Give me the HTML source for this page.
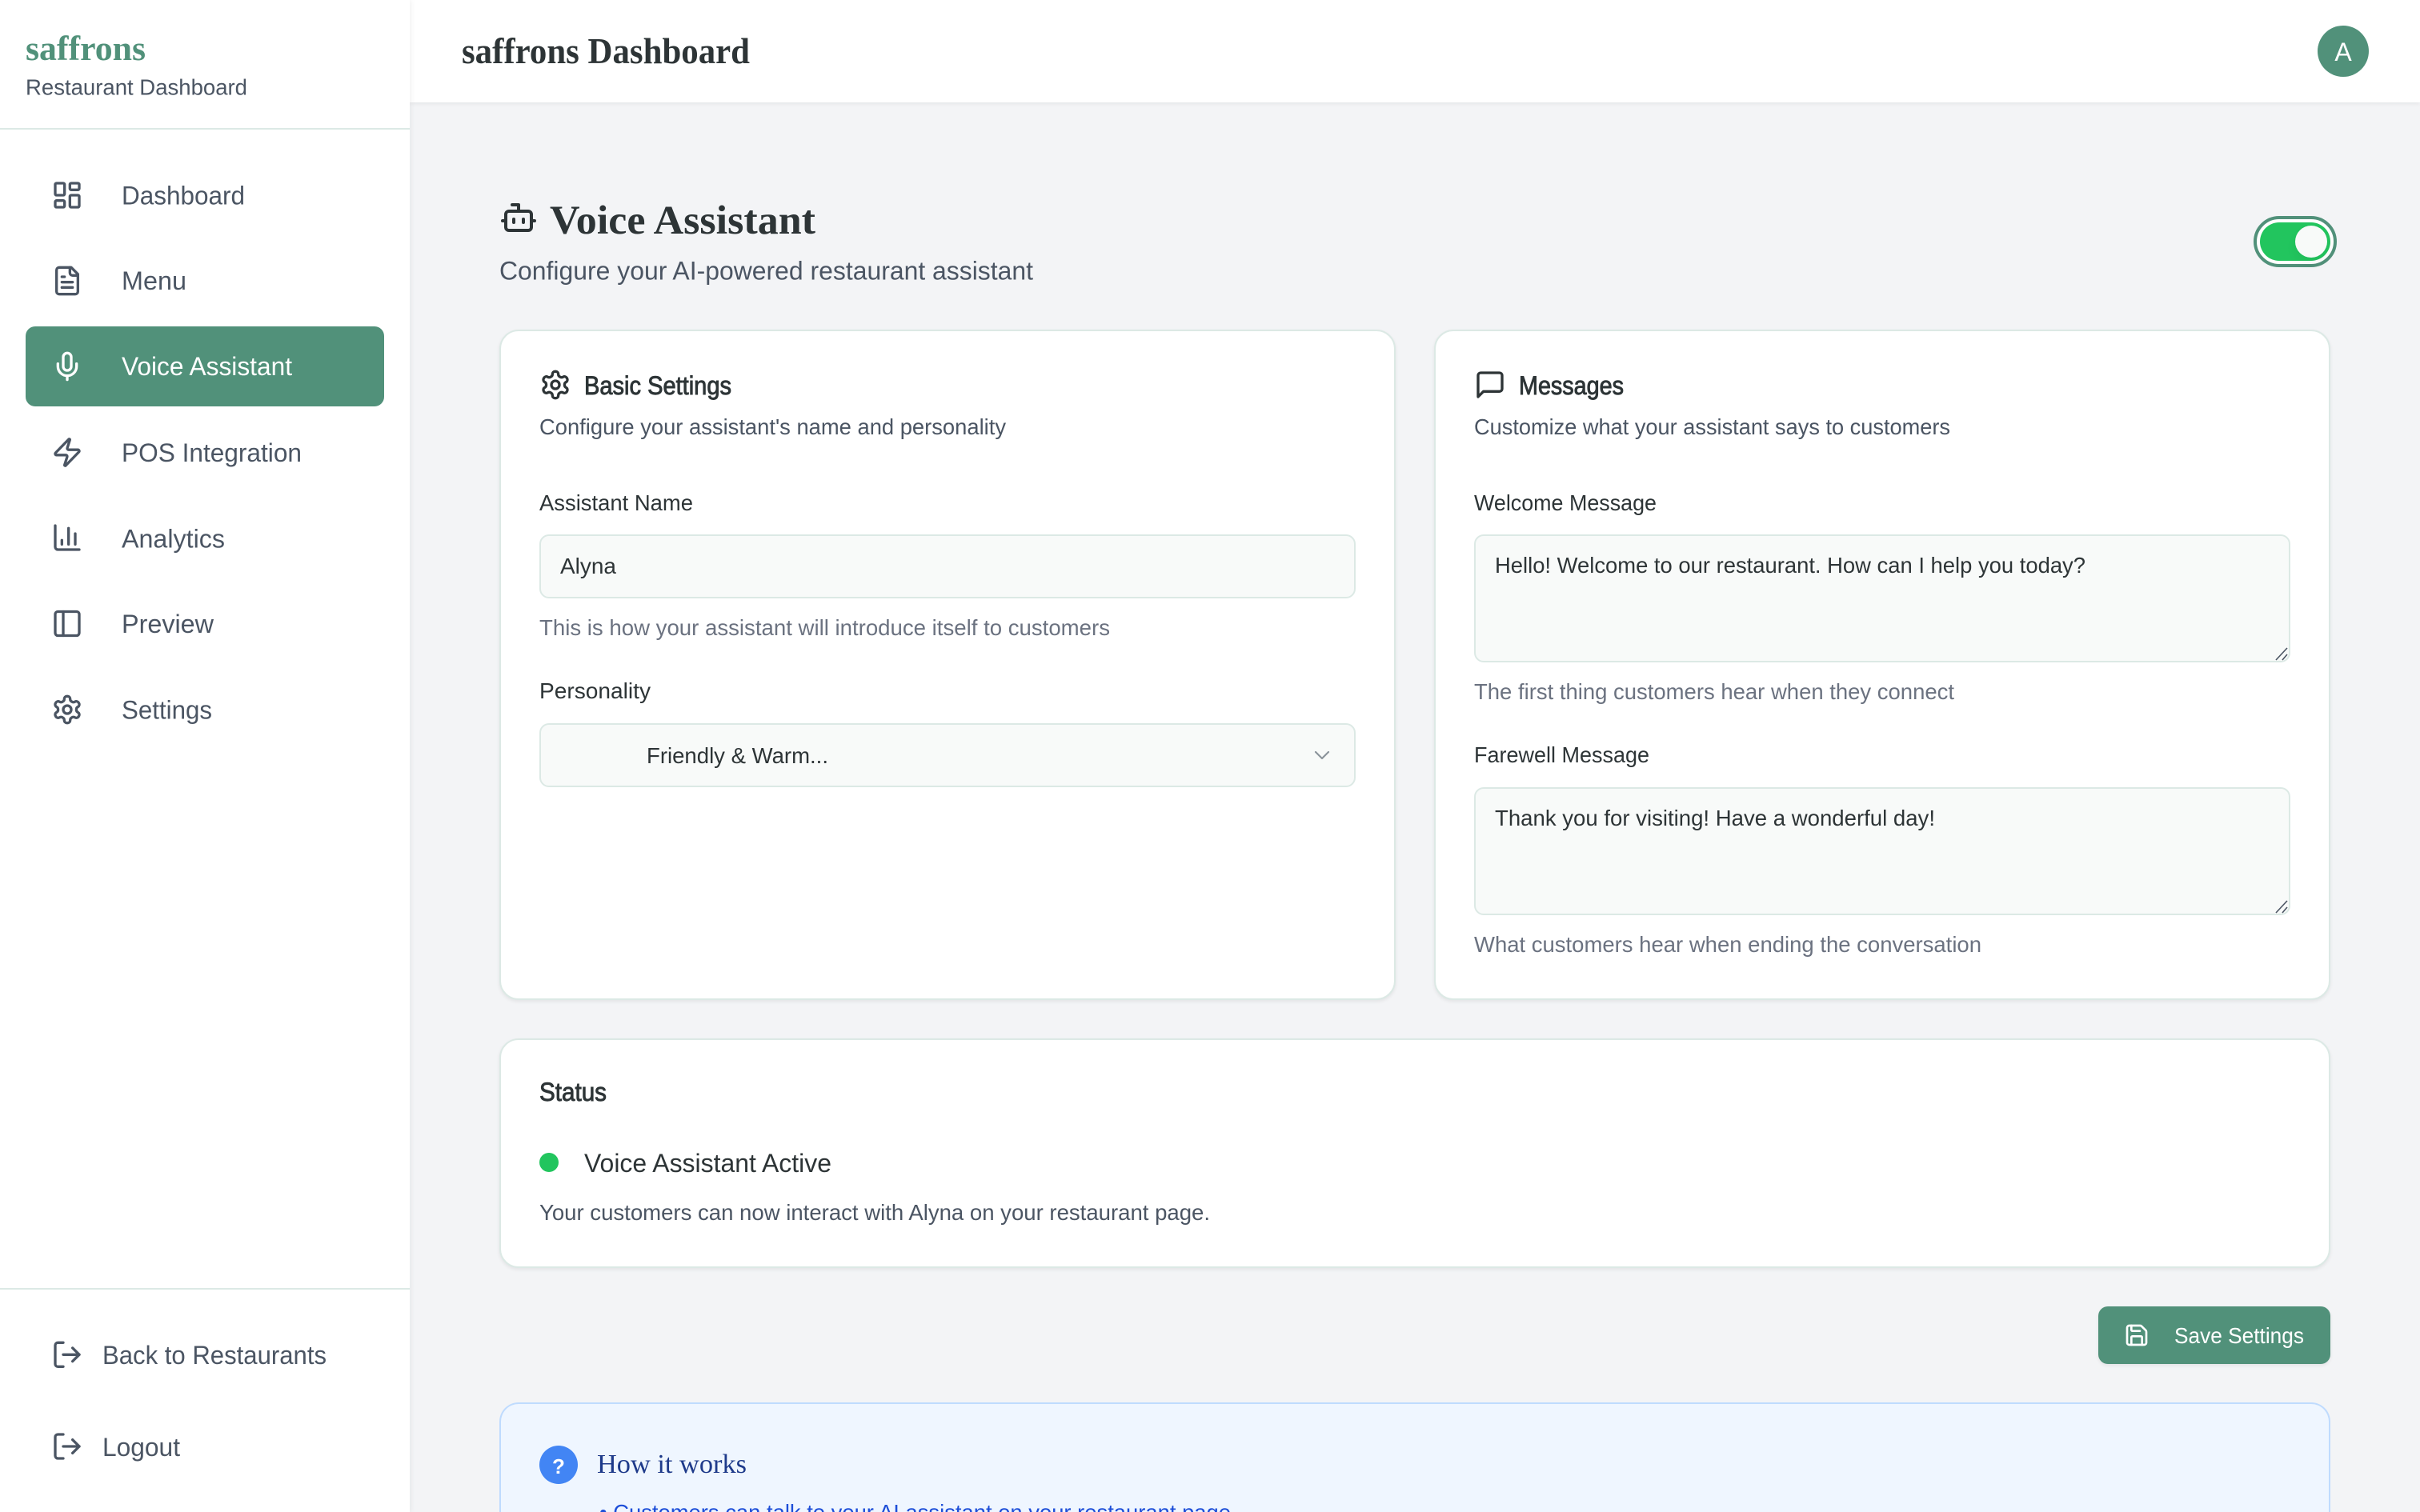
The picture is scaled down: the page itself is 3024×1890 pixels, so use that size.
<!DOCTYPE html>
<html lang="en">
<head>
<meta charset="utf-8">
<title>saffrons Dashboard - Voice Assistant</title>
<style>
html,body{margin:0;padding:0;width:3024px;height:1890px;overflow:hidden;background:#f3f4f6}
#page{position:relative;width:3024px;height:1890px;overflow:hidden;background:#f3f4f6}
.b{position:absolute;box-sizing:border-box}
.card{background:#fff;border:2px solid #dce9e5;border-radius:24px;box-shadow:0 2px 5px rgba(0,0,0,.07)}
.field{background:#f8faf9;border:2px solid #dce9e5;border-radius:12px}
svg.o{position:absolute;left:0;top:0;width:3024px;height:1890px}
text{font-family:"Liberation Sans",Arial,sans-serif;font-size:28px;fill:#2d3436}
.s{font-family:"Liberation Serif","Times New Roman",serif;font-weight:700}
.n{font-size:32px;fill:#4b5563}
.g{fill:#4b5563}
.h{fill:#6b7280}
.t{font-size:32px;fill:#2d3436;stroke:#2d3436;stroke-width:.9px}
.i{fill:none;stroke-width:2;stroke-linecap:round;stroke-linejoin:round}
</style>
</head>
<body>
<div id="page">
<svg width="0" height="0" style="position:absolute">
<defs>
<symbol id="gear" viewBox="0 0 24 24"><path d="M12.22 2h-.44a2 2 0 0 0-2 2v.18a2 2 0 0 1-1 1.73l-.43.25a2 2 0 0 1-2 0l-.15-.08a2 2 0 0 0-2.73.73l-.22.38a2 2 0 0 0 .73 2.73l.15.1a2 2 0 0 1 1 1.72v.51a2 2 0 0 1-1 1.74l-.15.09a2 2 0 0 0-.73 2.73l.22.38a2 2 0 0 0 2.73.73l.15-.08a2 2 0 0 1 2 0l.43.25a2 2 0 0 1 1 1.73V20a2 2 0 0 0 2 2h.44a2 2 0 0 0 2-2v-.18a2 2 0 0 1 1-1.73l.43-.25a2 2 0 0 1 2 0l.15.08a2 2 0 0 0 2.73-.73l.22-.39a2 2 0 0 0-.73-2.73l-.15-.08a2 2 0 0 1-1-1.74v-.5a2 2 0 0 1 1-1.74l.15-.09a2 2 0 0 0 .73-2.73l-.22-.38a2 2 0 0 0-2.73-.73l-.15.08a2 2 0 0 1-2 0l-.43-.25a2 2 0 0 1-1-1.73V4a2 2 0 0 0-2-2z"/><circle cx="12" cy="12" r="3"/></symbol>
<symbol id="out" viewBox="0 0 24 24"><path d="M9 21H5a2 2 0 0 1-2-2V5a2 2 0 0 1 2-2h4"/><path d="M16 17l5-5-5-5"/><path d="M21 12H9"/></symbol>
</defs>
</svg>

<!-- header -->
<div class="b" style="left:512px;top:0;width:2512px;height:128px;background:#fff;box-shadow:0 2px 5px rgba(0,0,0,.06)"></div>
<!-- sidebar -->
<div class="b" style="left:0;top:0;width:512px;height:1890px;background:#fff;box-shadow:2px 0 6px rgba(0,0,0,.05)"></div>
<div class="b" style="left:0;top:160px;width:512px;height:2px;background:#dce9e5"></div>
<div class="b" style="left:0;top:1610px;width:512px;height:2px;background:#dce9e5"></div>
<div class="b" style="left:32px;top:408px;width:448px;height:100px;background:#51917a;border-radius:12px"></div>

<!-- avatar -->
<div class="b" style="left:2896px;top:32px;width:64px;height:64px;border-radius:50%;background:#51917a"></div>
<!-- toggle -->
<div class="b" style="left:2816px;top:270px;width:104px;height:64px;border-radius:32px;border:4px solid #51917a;background:#fff"></div>
<div class="b" style="left:2824px;top:278px;width:88px;height:48px;border-radius:24px;background:#22c55e"></div>
<div class="b" style="left:2868px;top:282px;width:40px;height:40px;border-radius:50%;background:#f8faf9;box-shadow:0 8px 14px rgba(0,0,0,.05)"></div>

<!-- cards -->
<div class="b card" style="left:624px;top:412px;width:1120px;height:838px"></div>
<div class="b card" style="left:1792px;top:412px;width:1120px;height:838px"></div>
<div class="b card" style="left:624px;top:1298px;width:2288px;height:287px"></div>

<div class="b field" style="left:674px;top:668px;width:1020px;height:80px"></div>
<div class="b field" style="left:674px;top:904px;width:1020px;height:80px"></div>
<div class="b field" style="left:1842px;top:668px;width:1020px;height:160px"></div>
<div class="b field" style="left:1842px;top:984px;width:1020px;height:160px"></div>

<div class="b" style="left:674px;top:1441px;width:24px;height:24px;border-radius:50%;background:#22c55e"></div>

<!-- save -->
<div class="b" style="left:2622px;top:1633px;width:290px;height:72px;border-radius:12px;background:#51917a;box-shadow:0 2px 5px rgba(0,0,0,.07)"></div>

<!-- info: ends exactly at the frame's bottom edge -->
<div class="b" style="left:624px;top:1753px;width:2288px;height:137px;border-radius:24px 24px 0 0;background:#eff6ff;border:2px solid #bfdbfe;border-bottom:0"></div>
<div class="b" style="left:674px;top:1807px;width:48px;height:48px;border-radius:50%;background:#4285f4"></div>

<svg class="o" viewBox="0 0 3024 1890" xmlns="http://www.w3.org/2000/svg">
<!-- brand -->
<text class="s" x="32" y="75" textLength="150" lengthAdjust="spacingAndGlyphs" style="font-size:43px;fill:#51917a">saffrons</text>
<text class="g" x="32" y="118.5" textLength="277" lengthAdjust="spacingAndGlyphs">Restaurant Dashboard</text>
<text class="s" x="577" y="79" textLength="360" lengthAdjust="spacingAndGlyphs" style="font-size:46px;fill:#2d3436">saffrons Dashboard</text>
<text x="2928" y="76" text-anchor="middle" style="font-size:32px;fill:#fff">A</text>

<!-- nav text -->
<g transform="translate(0,-.5)">
<text class="n" x="152" y="256" textLength="154" lengthAdjust="spacingAndGlyphs">Dashboard</text>
<text class="n" x="152" y="362.5" textLength="81" lengthAdjust="spacingAndGlyphs">Menu</text>
<text class="n" x="152" y="469.5" textLength="213" lengthAdjust="spacingAndGlyphs" style="fill:#fff">Voice Assistant</text>
<text class="n" x="152" y="577.5" textLength="225" lengthAdjust="spacingAndGlyphs">POS Integration</text>
<text class="n" x="152" y="685" textLength="129" lengthAdjust="spacingAndGlyphs">Analytics</text>
<text class="n" x="152" y="791.5" textLength="115" lengthAdjust="spacingAndGlyphs">Preview</text>
<text class="n" x="152" y="899" textLength="113" lengthAdjust="spacingAndGlyphs">Settings</text>
<text class="n" x="128" y="1705.5" textLength="280" lengthAdjust="spacingAndGlyphs">Back to Restaurants</text>
<text class="n" x="128" y="1820.5" textLength="97" lengthAdjust="spacingAndGlyphs">Logout</text>
</g>

<!-- nav icons -->
<g class="i" style="fill:none;stroke:#4b5563">
<svg x="64" y="224" width="40" height="40" viewBox="0 0 24 24"><rect x="3" y="3" width="7" height="9" rx="1"/><rect x="14" y="3" width="7" height="5" rx="1"/><rect x="14" y="12" width="7" height="9" rx="1"/><rect x="3" y="16" width="7" height="5" rx="1"/></svg>
<svg x="64" y="331" width="40" height="40" viewBox="0 0 24 24"><path d="M15 2H6a2 2 0 0 0-2 2v16a2 2 0 0 0 2 2h12a2 2 0 0 0 2-2V7Z"/><path d="M14 2v4a2 2 0 0 0 2 2h4"/><path d="M10 9H8"/><path d="M16 13H8"/><path d="M16 17H8"/></svg>
<svg x="64" y="545.5" width="40" height="40" viewBox="0 0 24 24"><path d="M4 14a1 1 0 0 1-.78-1.63l9.9-10.2a.5.5 0 0 1 .86.46l-1.92 6.02A1 1 0 0 0 13 10h7a1 1 0 0 1 .78 1.63l-9.9 10.2a.5.5 0 0 1-.86-.46l1.92-6.02A1 1 0 0 0 11 14z"/></svg>
<svg x="64" y="652" width="40" height="40" viewBox="0 0 24 24"><path d="M3 3v16a2 2 0 0 0 2 2h16"/><path d="M18 17V9"/><path d="M13 17V5"/><path d="M8 17v-3"/></svg>
<svg x="64" y="759.5" width="40" height="40" viewBox="0 0 24 24"><rect x="3" y="3" width="18" height="18" rx="2"/><path d="M9 3v18"/></svg>
<svg x="64" y="867" width="40" height="40"><use href="#gear"/></svg>
<svg x="64" y="1673.3" width="40" height="40"><use href="#out"/></svg>
<svg x="64" y="1788" width="40" height="40"><use href="#out"/></svg>
</g>
<g class="i" style="fill:none;stroke:#fff">
<svg x="64" y="438" width="40" height="40" viewBox="0 0 24 24"><path d="M12 2a3 3 0 0 0-3 3v7a3 3 0 0 0 6 0V5a3 3 0 0 0-3-3Z"/><path d="M19 10v2a7 7 0 0 1-14 0v-2"/><path d="M12 19v3"/></svg>
<svg x="2654" y="1653" width="32" height="32" viewBox="0 0 24 24"><path d="M15.2 3a2 2 0 0 1 1.4.6l3.8 3.8a2 2 0 0 1 .6 1.4V19a2 2 0 0 1-2 2H5a2 2 0 0 1-2-2V5a2 2 0 0 1 2-2z"/><path d="M17 21v-7a1 1 0 0 0-1-1H8a1 1 0 0 0-1 1v7"/><path d="M7 3v4a1 1 0 0 0 1 1h7"/></svg>
</g>
<g class="i" style="fill:none;stroke:#2d3436">
<svg x="624" y="248" width="48" height="48" viewBox="0 0 24 24"><path d="M12 8V4H8"/><rect x="4" y="8" width="16" height="12" rx="2"/><path d="M2 14h2"/><path d="M20 14h2"/><path d="M15 13v2"/><path d="M9 13v2"/></svg>
<svg x="674" y="461" width="40" height="40"><use href="#gear"/></svg>
<svg x="1842" y="461" width="40" height="40" viewBox="0 0 24 24"><path d="M21 15a2 2 0 0 1-2 2H7l-4 4V5a2 2 0 0 1 2-2h14a2 2 0 0 1 2 2z"/></svg>
</g>
<g style="fill:none;stroke:#8b949b;stroke-width:1.6;stroke-linecap:round;stroke-linejoin:round">
<svg x="1636" y="928" width="32" height="32" viewBox="0 0 24 24"><path d="m6 9 6 6 6-6"/></svg>
</g>

<!-- title -->
<text class="s" x="687" y="292" textLength="332" lengthAdjust="spacingAndGlyphs" style="font-size:51px;fill:#2d3436">Voice Assistant</text>
<text class="g" x="624" y="349.5" textLength="667" lengthAdjust="spacingAndGlyphs" style="font-size:32px">Configure your AI-powered restaurant assistant</text>

<!-- basic settings -->
<text class="t" x="730" y="493" textLength="184" lengthAdjust="spacingAndGlyphs">Basic Settings</text>
<g transform="translate(0,-1)">
<text class="g" x="674" y="544" textLength="583" lengthAdjust="spacingAndGlyphs">Configure your assistant's name and personality</text>
<text x="674" y="639" textLength="192" lengthAdjust="spacingAndGlyphs">Assistant Name</text>
<text x="700" y="718" textLength="70" lengthAdjust="spacingAndGlyphs">Alyna</text>
<text class="h" x="674" y="795" textLength="713" lengthAdjust="spacingAndGlyphs">This is how your assistant will introduce itself to customers</text>
<text x="674" y="874" textLength="139" lengthAdjust="spacingAndGlyphs">Personality</text>
<text x="808" y="955" textLength="227" lengthAdjust="spacingAndGlyphs">Friendly &amp; Warm...</text>
</g>

<!-- messages -->
<text class="t" x="1898" y="493" textLength="131" lengthAdjust="spacingAndGlyphs">Messages</text>
<g transform="translate(0,-1)">
<text class="g" x="1842" y="544" textLength="595" lengthAdjust="spacingAndGlyphs">Customize what your assistant says to customers</text>
<text x="1842" y="639" textLength="228" lengthAdjust="spacingAndGlyphs">Welcome Message</text>
<text x="1868" y="717" textLength="738" lengthAdjust="spacingAndGlyphs">Hello! Welcome to our restaurant. How can I help you today?</text>
<text class="h" x="1842" y="875" textLength="600" lengthAdjust="spacingAndGlyphs">The first thing customers hear when they connect</text>
<text x="1842" y="954" textLength="219" lengthAdjust="spacingAndGlyphs">Farewell Message</text>
<text x="1868" y="1033" textLength="550" lengthAdjust="spacingAndGlyphs">Thank you for visiting! Have a wonderful day!</text>
<text class="h" x="1842" y="1191" textLength="634" lengthAdjust="spacingAndGlyphs">What customers hear when ending the conversation</text>
</g>
<g stroke="#4b5563" stroke-width="1.6" fill="none">
<path d="M2844 825L2858 810M2852 825L2858 818"/>
<path d="M2844 1141L2858 1126M2852 1141L2858 1134"/>
</g>

<!-- status -->
<text class="t" x="674" y="1376" textLength="84" lengthAdjust="spacingAndGlyphs">Status</text>
<g transform="translate(0,-1)">
<text x="730" y="1466" textLength="309" lengthAdjust="spacingAndGlyphs" style="font-size:32px">Voice Assistant Active</text>
<text class="g" x="674" y="1526" textLength="838" lengthAdjust="spacingAndGlyphs">Your customers can now interact with Alyna on your restaurant page.</text>
</g>

<!-- save -->
<text x="2717" y="1679" textLength="162" lengthAdjust="spacingAndGlyphs" style="fill:#fff">Save Settings</text>

<!-- info -->
<text x="698" y="1842" text-anchor="middle" style="font-size:26px;font-weight:700;fill:#fff">?</text>
<text class="s" x="746" y="1841" textLength="187" lengthAdjust="spacingAndGlyphs" style="font-size:34px;font-weight:400;fill:#1e3a8a">How it works</text>
<text x="749" y="1900" textLength="789" lengthAdjust="spacingAndGlyphs" style="fill:#1d4ed8">• Customers can talk to your AI assistant on your restaurant page</text>
</svg>
</div>
</body>
</html>
